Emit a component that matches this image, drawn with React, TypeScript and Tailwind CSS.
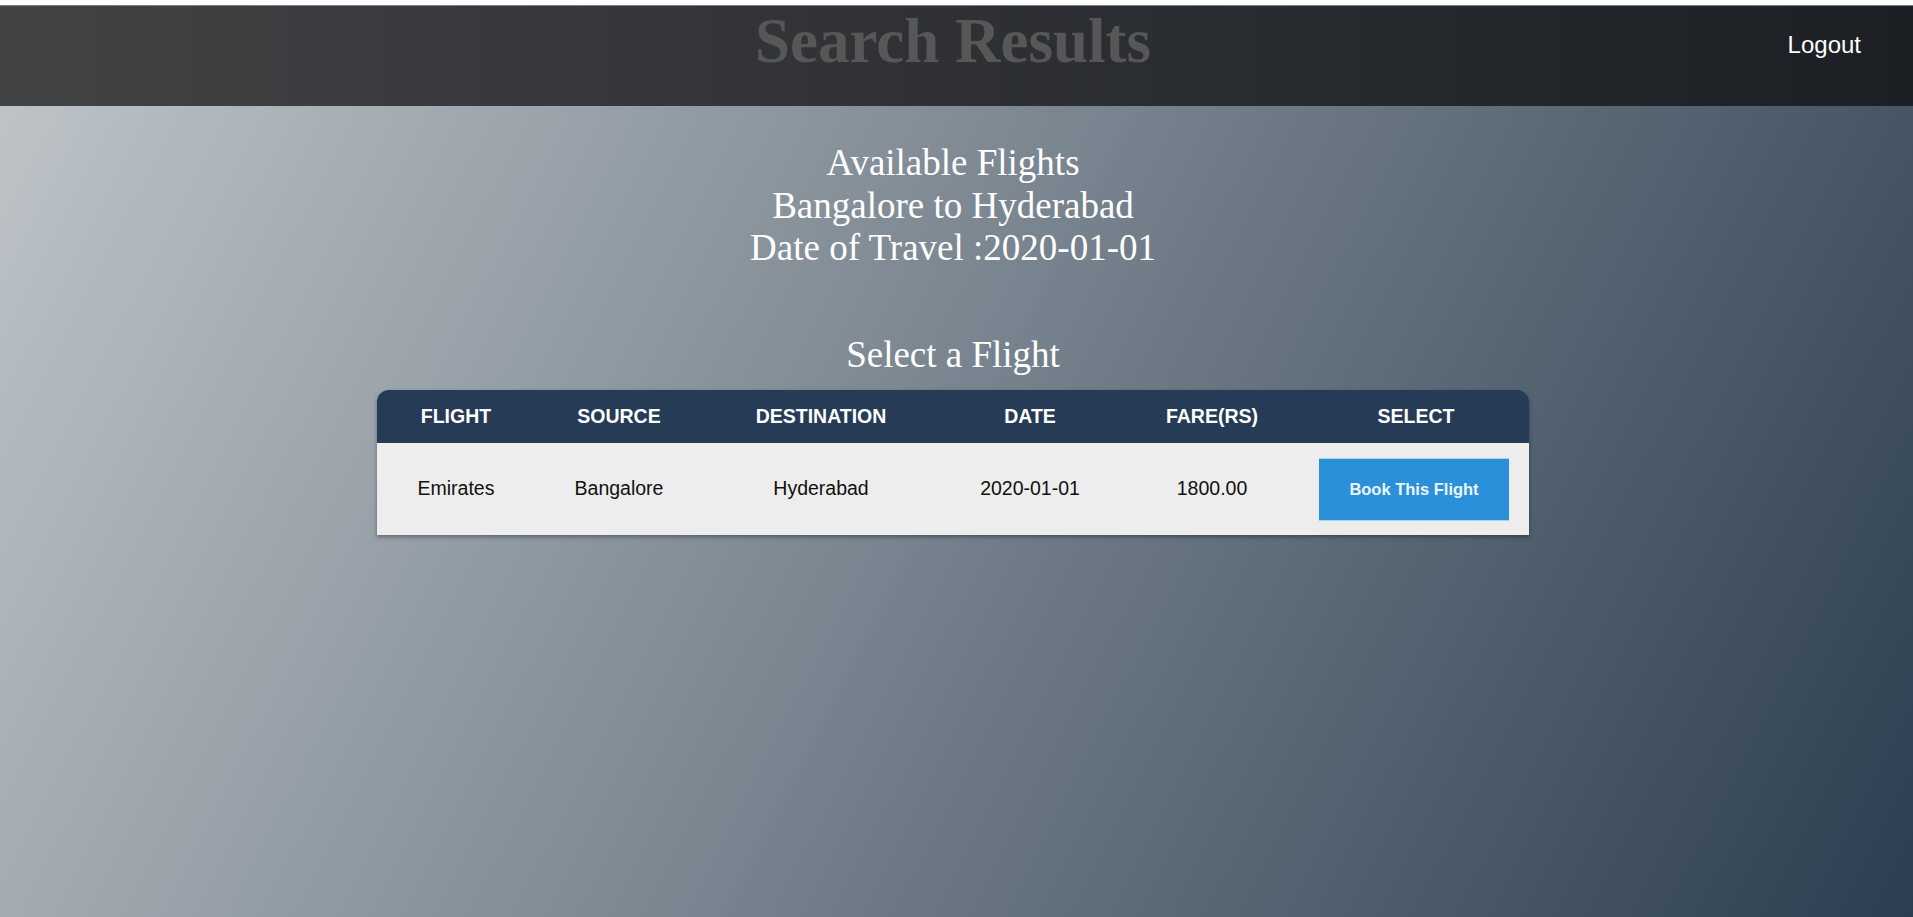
import React from "react";

interface Flight {
  name: string;
  source: string;
  destination: string;
  date: string;
  fare: string;
}

const flights: Flight[] = [
  {
    name: "Emirates",
    source: "Bangalore",
    destination: "Hyderabad",
    date: "2020-01-01",
    fare: "1800.00",
  },
];

const columns = ["FLIGHT", "SOURCE", "DESTINATION", "DATE", "FARE(RS)", "SELECT"];

const App: React.FC = () => {
  return (
    <div className="min-h-screen flex flex-col bg-white pt-[5px]">
      {/* top bar */}
      <header className="h-[101px] shrink-0 border-t border-[#7d7d7d] bg-[linear-gradient(to_right,#414345,#1c1f24)] grid grid-cols-[1fr_auto_1fr]">
        <div />
        <h1 className="mr-[7px] text-[63px] leading-[71px] font-bold text-[#575757] font-['Liberation_Serif',serif]">
          Search Results
        </h1>
        <div className="justify-self-end pt-[21px] pr-[52px]">
          <button className="text-[24px] text-white font-['Liberation_Sans',Arial,sans-serif]">
            Logout
          </button>
        </div>
      </header>

      <main className="flex-1 flex flex-col items-center pt-[36px] pr-[7px] bg-[linear-gradient(117deg,#bdc3c7,#2c3e50)] font-['Liberation_Serif',serif] text-white">
        <div className="text-center text-[37px] leading-[42.5px]">
          <div>Available Flights</div>
          <div>Bangalore to Hyderabad</div>
          <div>Date of Travel :2020-01-01</div>
        </div>

        <h2 className="mt-[64px] text-center text-[37px] leading-[42.5px]">Select a Flight</h2>

        <div className="mt-[14px] w-[1152px] rounded-t-[12px] overflow-hidden shadow-[0_2px_4px_rgba(0,0,0,0.35)] font-['Liberation_Sans',Arial,sans-serif]">
          <table className="w-full table-fixed border-collapse">
            <colgroup>
              <col className="w-[158px]" />
              <col className="w-[168px]" />
              <col className="w-[236px]" />
              <col className="w-[182px]" />
              <col className="w-[182px]" />
              <col className="w-[226px]" />
            </colgroup>
            <thead>
              <tr className="bg-[#253b56]">
                {columns.map((c) => (
                  <th key={c} className="h-[53px] p-0 text-center text-[19.5px] font-bold text-white">
                    {c}
                  </th>
                ))}
              </tr>
            </thead>
            <tbody>
              {flights.map((f) => (
                <tr key={f.name} className="bg-[#ededed] text-[19.5px] text-[#111]">
                  <td className="h-[92px] p-0 text-center">{f.name}</td>
                  <td className="p-0 text-center">{f.source}</td>
                  <td className="p-0 text-center">{f.destination}</td>
                  <td className="p-0 text-center">{f.date}</td>
                  <td className="p-0 text-center">{f.fare}</td>
                  <td className="p-0 pl-[16px] pr-[20px]">
                    <button className="w-[190px] h-[63px] bg-[#2a90d9] border-y border-[#a9d3f1] text-[16.5px] font-bold text-[#eaf5fc]">
                      Book This Flight
                    </button>
                  </td>
                </tr>
              ))}
            </tbody>
          </table>
        </div>
      </main>
    </div>
  );
};

export default App;
